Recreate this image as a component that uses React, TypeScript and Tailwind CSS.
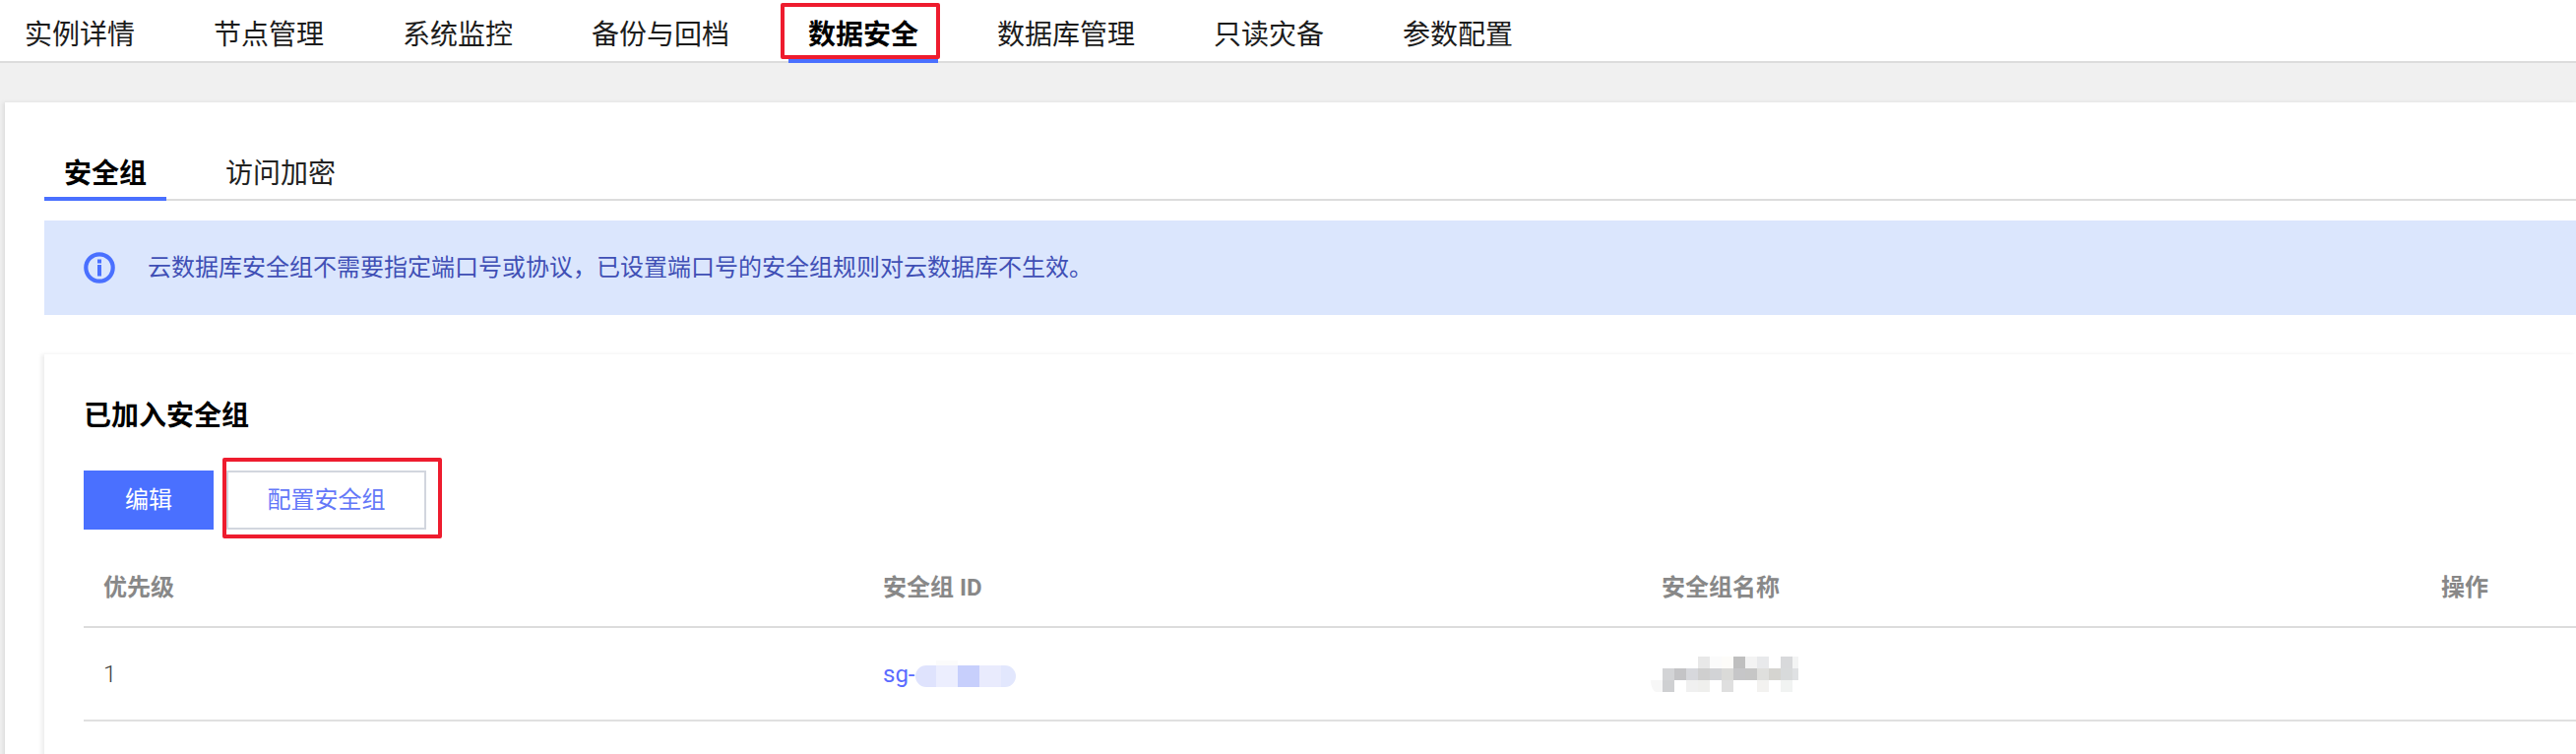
import React from "react";

const FONT = "font-['Roboto','Noto_Sans_CJK_SC',sans-serif]";

const navItems = ["实例详情", "节点管理", "系统监控", "备份与回档", "数据安全", "数据库管理", "只读灾备", "参数配置"];

const idCells = [
  { x: 0, w: 21, fill: "#dfe3fd" },
  { x: 21, w: 22, fill: "#eceefe" },
  { x: 43, w: 22, fill: "#c7cffc" },
  { x: 65, w: 22, fill: "#e9ebfd" },
  { x: 87, w: 15, fill: "#e2e7fd" },
];

const nameRows: (string | null)[][] = [
  [null, null, null, "#e8e8e8", "#fbfbfb", "#fdfcf9", "#bfbfbf", "#f3f3f3", "#e8e9eb", null, "#d8d9db", "#f3f4f4"],
  ["#d3d4d6", "#c4c4c6", "#d7d8dc", "#cfcfcf", "#d2d3d6", "#dadad8", "#c6c6c8", "#c6c6c6", "#dfdfdd", "#d5d4d0", "#d8dadb", "#dfe1e3"],
  ["#cfd0d2", null, "#f0f0f0", "#efefed", null, "#dfdfdf", null, null, "#f3f2f0", null, "#f1f3f2", null],
];

function IdMosaic() {
  return (
    <svg width="102" height="27" viewBox="0 0 102 27" className="block">
      <defs>
        <clipPath id="pill">
          <rect x="0" y="5" width="102" height="22" rx="11" />
        </clipPath>
      </defs>
      <rect x="21" y="0" width="22" height="5" fill="#fbfbfb" />
      <g clipPath="url(#pill)">
        {idCells.map((c) => (
          <rect key={c.x} x={c.x} y="5" width={c.w} height="22" fill={c.fill} />
        ))}
      </g>
    </svg>
  );
}

function NameMosaic() {
  return (
    <svg width="150" height="36" viewBox="0 0 150 36" className="block">
      <path d="M0 24h12v12h-6a6 12 0 0 1-6-12z" fill="#f7f7f7" />
      {nameRows.map((row, r) =>
        row.map((fill, c) =>
          fill ? <rect key={`${r}-${c}`} x={12 + c * 12} y={r * 12} width="12" height="12" fill={fill} /> : null
        )
      )}
    </svg>
  );
}

export default function App() {
  return (
    <div className={`${FONT} w-[2617px] h-[766px] overflow-hidden bg-[#f0f0f0] flex flex-col`}>
      <nav className="h-[64px] shrink-0 bg-white border-b-2 border-[#dcdcdc] flex pl-[25px] gap-[80px] text-[28px] leading-[40px] text-[#1c1c1c]">
        {navItems.map((t) => {
          const active = t === "数据安全";
          return (
            <div key={t} className={`relative h-[62px] pt-[16px] whitespace-nowrap ${active ? "font-bold text-black" : ""}`}>
              {t}
              {active && (
                <>
                  <span className="absolute left-[-20px] right-[-20px] top-[60px] h-[4px] bg-[#4a70ff]" />
                  <span className="absolute left-[-28px] right-[-22px] top-[3px] h-[57px] border-[4px] border-[#ee1c2e] rounded-[2px]" />
                </>
              )}
            </div>
          );
        })}
      </nav>

      <div className="flex-1 pt-[40px] pl-[5px]">
        <main className="h-full bg-white pl-[40px] pt-[53px] shadow-[-2px_0_4px_rgba(0,0,0,0.08)]">
          <div className="flex h-[47px] border-b-2 border-[#dcdcdc] text-[28px] leading-[40px] text-[#222]">
            <div className="relative w-[124px] h-[45px] text-center font-bold text-black">
              安全组
              <span className="absolute left-0 right-0 top-[43px] h-[4px] bg-[#4a70ff]" />
            </div>
            <div className="ml-[40px] w-[152px] h-[45px] text-center">访问加密</div>
          </div>

          <div className="mt-[20px] h-[96px] bg-[#dbe6fd] flex items-center pl-[40px] text-[24px] text-[#3f4fb5]">
            <svg width="32" height="32" viewBox="0 0 32 32" className="shrink-0 block">
              <circle cx="16" cy="16" r="13.7" fill="none" stroke="#4a70ff" strokeWidth="4.2" />
              <rect x="14" y="7.5" width="4" height="4" fill="#4a70ff" />
              <rect x="14" y="13" width="4" height="11.5" fill="#4a70ff" />
            </svg>
            <span className="ml-[33px]">云数据库安全组不需要指定端口号或协议，已设置端口号的安全组规则对云数据库不生效。</span>
          </div>

          <section className="mt-[40px] h-[420px] bg-white pl-[40px] pt-[43px] shadow-[-3px_0_4px_rgba(0,0,0,0.07)]">
            <h2 className="text-[28px] leading-[40px] font-bold text-black">已加入安全组</h2>
            <div className="mt-[35px] flex gap-[13px]">
              <button className="w-[132px] h-[60px] bg-[#4a70ff] text-white text-[24px]">编辑</button>
              <div className="relative">
                <button className="w-[203px] h-[60px] bg-white border-2 border-[#d2d6de] text-[#6478f8] text-[24px]">配置安全组</button>
                <span className="absolute left-[-4px] top-[-13px] w-[223px] h-[82px] border-[4px] border-[#ee1c2e] rounded-[2px]" />
              </div>
            </div>

            <div className="mt-[30px] grid grid-cols-[792px_791px_792px_1fr] h-[70px] pb-[10px] items-center border-b-2 border-[#dcdcdc] text-[24px] font-bold text-[#888888]">
              <div className="pl-[20px]">优先级</div>
              <div className="pl-[20px]">安全组 ID</div>
              <div className="pl-[20px]">安全组名称</div>
              <div className="pl-[20px]">操作</div>
            </div>
            <div className="grid grid-cols-[792px_791px_792px_1fr] h-[95px] items-center border-b-2 border-[#e0e0e0] text-[24px] text-[#444]">
              <div className="pl-[20px] font-light">1</div>
              <div className="pl-[20px] flex items-center">
                <span className="text-[#5b6cff]">sg-</span>
                <IdMosaic />
              </div>
              <div className="pl-[9px]">
                <NameMosaic />
              </div>
              <div />
            </div>
          </section>
        </main>
      </div>
    </div>
  );
}
